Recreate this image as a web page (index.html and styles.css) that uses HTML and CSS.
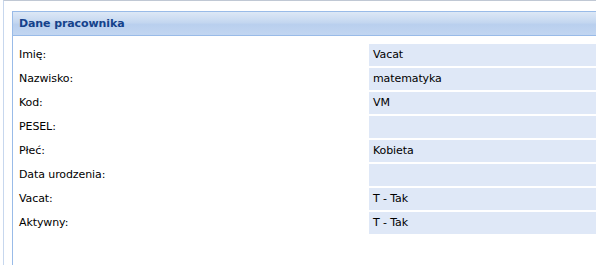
FILE: index.html
```html
<!DOCTYPE html>
<html lang="pl">
<head>
    <meta charset="UTF-8">
    <title>Dane pracownika</title>
    <link rel="stylesheet" href="styles.css">
</head>
<body>
    <div class="frame">
        <div class="panel">
            <div class="panel-header">Dane pracownika</div>
            <div class="panel-body">
                <div class="row"><span class="label">Imię:</span><span class="value">Vacat</span></div>
                <div class="row"><span class="label">Nazwisko:</span><span class="value">matematyka</span></div>
                <div class="row"><span class="label">Kod:</span><span class="value">VM</span></div>
                <div class="row"><span class="label">PESEL:</span><span class="value"></span></div>
                <div class="row"><span class="label">Płeć:</span><span class="value">Kobieta</span></div>
                <div class="row"><span class="label">Data urodzenia:</span><span class="value"></span></div>
                <div class="row"><span class="label">Vacat:</span><span class="value">T - Tak</span></div>
                <div class="row"><span class="label">Aktywny:</span><span class="value">T - Tak</span></div>
            </div>
        </div>
    </div>
</body>
</html>
```

FILE: styles.css
```css
* {
    margin: 0;
    padding: 0;
    box-sizing: border-box;
}

body {
    font-family: "DejaVu Sans", sans-serif;
    font-size: 11px;
    color: #000;
    background-color: #fff;
    overflow: hidden;
    height: 265px;
}

/* outer frame */
.frame {
    margin-left: 3px;
    height: 265px;
    border-left: 1px solid #c7d7ee;
    border-top: 1px solid #c0c8d4;
    padding: 10px 0 0 8px;
}

.panel {
    height: 100%;
    border: 1px solid #99bbe8;
    border-bottom: none;
    border-right: none;
}

.panel-header {
    height: 24px;
    line-height: 23px;
    padding-left: 6px;
    font-weight: bold;
    color: #15428b;
    letter-spacing: -0.1px;
    background: linear-gradient(#dde8f6, #c4d7f0 45%, #b9cfee 55%, #c2d6f1);
    border-bottom: 1px solid #99bbe8;
}

.panel-body {
    padding-top: 8px;
}

.row {
    display: grid;
    grid-template-columns: 356px 1fr;
    height: 22px;
    margin-bottom: 2px;
    line-height: 22px;
    letter-spacing: -0.1px;
}

.label {
    padding-left: 6px;
}

.value {
    background-color: #dfe8f7;
    padding-left: 4px;
}
```
